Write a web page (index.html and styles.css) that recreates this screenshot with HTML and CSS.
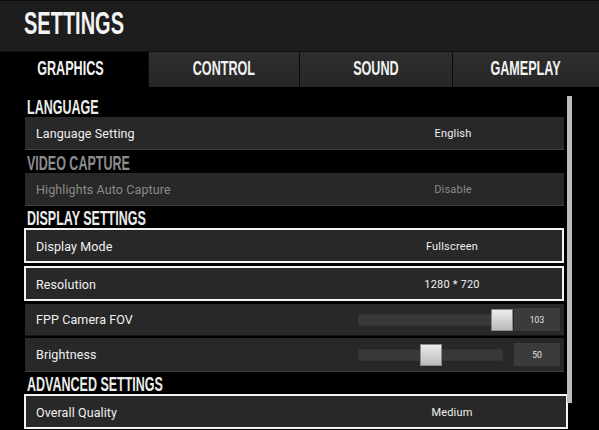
FILE: index.html
```html
<!DOCTYPE html>
<html>
<head>
<meta charset="utf-8">
<link rel="stylesheet" href="styles.css">
</head>
<body>
<div class="app">
  <header class="header">
    <h1 class="title"><span class="cond">SETTINGS</span></h1>
  </header>
  <nav class="tabs">
    <div class="tab active"><span class="cond">GRAPHICS</span></div>
    <div class="tab"><span class="cond">CONTROL</span></div>
    <div class="tab"><span class="cond">SOUND</span></div>
    <div class="tab"><span class="cond">GAMEPLAY</span></div>
  </nav>
  <main class="content">
    <div class="list">
      <div class="heading h-first"><span class="cond">LANGUAGE</span></div>
      <div class="row">
        <span class="label">Language Setting</span>
        <span class="value">English</span>
      </div>
      <div class="heading muted"><span class="cond">VIDEO CAPTURE</span></div>
      <div class="row disabled">
        <span class="label">Highlights Auto Capture</span>
        <span class="value">Disable</span>
      </div>
      <div class="heading h-tight"><span class="cond">DISPLAY SETTINGS</span></div>
      <div class="row selected">
        <span class="label">Display Mode</span>
        <span class="value">Fullscreen</span>
      </div>
      <div class="row selected">
        <span class="label">Resolution</span>
        <span class="value">1280 * 720</span>
      </div>
      <div class="row slider-row">
        <span class="label">FPP Camera FOV</span>
        <div class="track"><div class="thumb" style="left:132px"></div></div>
        <div class="numbox">103</div>
      </div>
      <div class="row slider-row">
        <span class="label">Brightness</span>
        <div class="track"><div class="thumb" style="left:61px"></div></div>
        <div class="numbox">50</div>
      </div>
      <div class="heading h-tight"><span class="cond">ADVANCED SETTINGS</span></div>
      <div class="row selected wide">
        <span class="label">Overall Quality</span>
        <span class="value">Medium</span>
      </div>
    </div>
    <div class="scrollbar"></div>
  </main>
</div>
</body>
</html>
```

FILE: styles.css
```css
* { box-sizing: border-box; }
html, body { margin: 0; padding: 0; background: #000; }
body {
  width: 599px;
  height: 430px;
  overflow: hidden;
  font-family: Roboto, "Liberation Sans", sans-serif;
  color: #f0f0f0;
}
.cond {
  display: inline-block;
  font-family: "Liberation Sans", Arial, sans-serif;
  font-weight: bold;
  transform: scaleX(0.6);
  transform-origin: left center;
  white-space: nowrap;
}
.header {
  height: 52px;
  background: #1d1d1d;
  border-top: 1px solid #0b0b0b;
  border-bottom: 1px solid #0e0e0e;
  padding-left: 24px;
}
.title {
  margin: 0;
  font-size: 32px;
  line-height: 45px;
  font-weight: normal;
  color: #f4f4f4;
}
.title .cond { transform: scaleX(0.625); }
.tabs {
  display: grid;
  grid-template-columns: 148px 150px 152px 1fr;
  column-gap: 1px;
  height: 35px;
  background: #0a0a0a;
}
.tab {
  display: flex;
  align-items: center;
  justify-content: center;
  background: linear-gradient(#2e2e2e, #272727);
  font-size: 21px;
  color: #f2f2f2;
  padding-bottom: 4px;
}
.tab .cond { transform-origin: center center; }
.tab.active { background: #000; padding-right: 8px; }
.content {
  display: flex;
  align-items: flex-start;
  padding-left: 25px;
}
.list {
  width: 539px;
  display: flex;
  flex-direction: column;
}
.heading {
  height: 23px;
  display: flex;
  align-items: flex-end;
  padding-left: 2px;
  font-size: 20px;
  line-height: 20px;
  color: #ececec;
}
.heading .cond { transform: scaleX(0.625); }
.h-first { height: 30px; }
.h-tight { height: 22px; }
.heading.muted { color: #8d8d8d; }
.row {
  display: flex;
  align-items: center;
  height: 33px;
  padding-left: 11px;
  background: #282828;
  border-bottom: 1px solid #3e3e3e;
  font-size: 12.5px;
  letter-spacing: 0.1px;
}
.row.disabled { color: #8a8a8a; }
.label { flex: 1; }
.value {
  width: 222px;
  text-align: center;
  font-size: 11px;
  letter-spacing: 0.2px;
}
.row.selected {
  height: 35px;
  border: 2px solid #f4f4f4;
  margin-left: -1px;
  padding-left: 10px;
  padding-top: 2px;
  margin-bottom: 3px;
}
.row.selected .value { margin-right: -1px; }
.row.wide { margin-right: -4px; margin-bottom: 0; }
.row.wide .value { margin-right: 3px; }
.slider-row {
  height: 32px;
  border-bottom: 1px solid #141414;
  margin-bottom: 2px;
}
.slider-row + .slider-row {
  height: 34px;
  border-bottom: 1px solid #3e3e3e;
  margin-bottom: 0;
}
.track {
  position: relative;
  width: 145px;
  height: 12px;
  background: #383838;
  border: 1px solid #323232;
  margin-right: 11px;
}
.thumb {
  position: absolute;
  top: -6px;
  width: 22px;
  height: 22px;
  background: linear-gradient(#ededed, #b9b9b9);
  border: 1px solid #8a8a8a;
}
.numbox {
  width: 46px;
  height: 23px;
  margin-right: 4px;
  background: #3b3b3b;
  display: flex;
  align-items: center;
  justify-content: center;
  font-size: 8.5px;
  color: #e6e6e6;
  letter-spacing: 0;
}
.scrollbar {
  width: 5px;
  height: 307px;
  margin-top: 9px;
  margin-left: 3px;
  background: #bcbcbc;
}
```
